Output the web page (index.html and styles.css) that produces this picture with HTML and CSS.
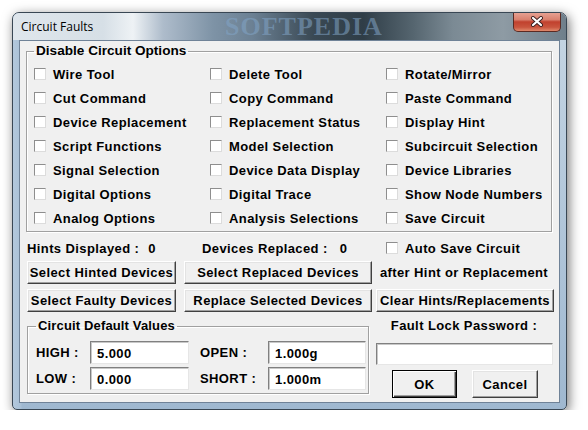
FILE: index.html
```html
<!DOCTYPE html>
<html>
<head>
<meta charset="utf-8">
<link rel="stylesheet" href="styles.css">
</head>
<body>
<div class="window">
  <div class="titlebar">
    <span class="title">Circuit Faults</span>
    <span class="watermark">SOFTPEDIA</span>
    <div class="close">
      <svg width="14" height="11" viewBox="0 0 14 11">
        <path d="M3 2 L11 9 M11 2 L3 9" stroke="#3a2020" stroke-width="4" stroke-linecap="round"/>
        <path d="M3 2 L11 9 M11 2 L3 9" stroke="#ffffff" stroke-width="2.2" stroke-linecap="round"/>
      </svg>
    </div>
  </div>
  <div class="client">
    <fieldset class="group options">
      <legend class="big">Disable Circuit Options</legend>
      <div class="opt-grid">
        <label class="chk"><span class="box"></span>Wire Tool</label>
        <label class="chk"><span class="box"></span>Delete Tool</label>
        <label class="chk"><span class="box"></span>Rotate/Mirror</label>
        <label class="chk"><span class="box"></span>Cut Command</label>
        <label class="chk"><span class="box"></span>Copy Command</label>
        <label class="chk"><span class="box"></span>Paste Command</label>
        <label class="chk"><span class="box"></span>Device Replacement</label>
        <label class="chk"><span class="box"></span>Replacement Status</label>
        <label class="chk"><span class="box"></span>Display Hint</label>
        <label class="chk"><span class="box"></span>Script Functions</label>
        <label class="chk"><span class="box"></span>Model Selection</label>
        <label class="chk"><span class="box"></span>Subcircuit Selection</label>
        <label class="chk"><span class="box"></span>Signal Selection</label>
        <label class="chk"><span class="box"></span>Device Data Display</label>
        <label class="chk"><span class="box"></span>Device Libraries</label>
        <label class="chk"><span class="box"></span>Digital Options</label>
        <label class="chk"><span class="box"></span>Digital Trace</label>
        <label class="chk"><span class="box"></span>Show Node Numbers</label>
        <label class="chk"><span class="box"></span>Analog Options</label>
        <label class="chk"><span class="box"></span>Analysis Selections</label>
        <label class="chk"><span class="box"></span>Save Circuit</label>
      </div>
    </fieldset>

    <div class="lower">
      <div class="stat"><span>Hints Displayed :</span><span class="num">0</span></div>
      <div class="stat stat2"><span>Devices Replaced :</span><span class="num">0</span></div>
      <label class="chk auto"><span class="box"></span>Auto Save Circuit</label>

      <button class="btn w1">Select Hinted Devices</button>
      <button class="btn w2">Select Replaced Devices</button>
      <div class="note">after Hint or Replacement</div>

      <button class="btn w1 r2">Select Faulty Devices</button>
      <button class="btn w2 r2">Replace Selected Devices</button>
      <button class="btn w3 r2">Clear Hints/Replacements</button>

      <fieldset class="group defaults">
        <legend>Circuit Default Values</legend>
        <div class="def-grid">
          <span class="lbl">HIGH :</span><div class="field w-a">5.000</div>
          <span class="lbl">OPEN :</span><div class="field w-b">1.000g</div>
          <span class="lbl">LOW :</span><div class="field w-a">0.000</div>
          <span class="lbl">SHORT :</span><div class="field w-b">1.000m</div>
        </div>
      </fieldset>

      <div class="lock">
        <div class="lock-title">Fault Lock Password :</div>
        <div class="field pw"></div>
        <div class="actions">
          <button class="btn ok">OK</button>
          <button class="btn cancel">Cancel</button>
        </div>
      </div>
    </div>
  </div>
</div>
</body>
</html>
```
FILE: styles.css
```css
html, body {
  margin: 0;
  padding: 0;
  background: #ffffff;
}
body {
  padding: 12px 0 0 12px;
  font-family: "Liberation Sans", Arial, sans-serif;
}
.window {
  width: 555px;
  height: 398px;
  box-sizing: border-box;
  border: 1px solid #394754;
  border-radius: 7px 7px 5px 5px;
  background:
    linear-gradient(90deg, #b3c8dc 0px, #a9c0d6 8px, rgba(0,0,0,0) 9px),
    linear-gradient(180deg, #c6d6e4 0%, #9fb8d0 100%);
  box-shadow: 2px 3px 12px rgba(0,0,0,0.55);
  display: flex;
  flex-direction: column;
  overflow: hidden;
}
.titlebar {
  height: 27px;
  display: flex;
  align-items: flex-start;
  position: relative;
  overflow: hidden;
  background: linear-gradient(90deg,
    #dfe6ec 0px, #d6dfe6 90px, #eef2f5 120px, #aebccb 150px,
    #7e93a6 200px, #6b8093 240px, #3a4954 300px, #2f3d47 350px,
    #55656f 400px, #7b8a94 440px, #8e9ba4 490px, #6e7e8a 555px);
  flex: none;
}
.title {
  font-family: "Open Sans", "Liberation Sans", sans-serif;
  font-size: 12px;
  color: #000;
  margin: 6px 0 0 8px;
  line-height: 16px;
}
.watermark {
  position: absolute;
  left: 212px;
  top: 1px;
  font-family: "Liberation Serif", serif;
  font-weight: bold;
  font-size: 26px;
  letter-spacing: 1px;
  color: rgba(130, 165, 200, 0.55);
  line-height: 26px;
}
.close {
  margin-left: auto;
  margin-right: 5px;
  margin-top: -1px;
  width: 46px;
  height: 19px;
  border: 1px solid #5b2a22;
  border-top: none;
  border-radius: 0 0 5px 5px;
  background: linear-gradient(180deg, #e8a597 0%, #d9816f 40%, #c1412e 52%, #c9553e 80%, #e08a6d 100%);
  display: flex;
  align-items: center;
  justify-content: center;
}
.client {
  margin: 0 6px 6px 6px;
  flex: 1;
  background: #f0f0f0;
  border: 1px solid #6f8297;
  padding: 1px 0 0 6px;
  font-weight: bold;
  font-size: 13px;
  letter-spacing: 0.4px;
  color: #000;
}
.group {
  margin: 0;
  border: 1px solid #a0a0a0;
  box-shadow: inset 1px 1px 0 #ffffff, 1px 1px 0 #ffffff;
  min-width: 0;
}
.group legend {
  padding: 0 2px;
  font-weight: bold;
  font-size: 13px;
  line-height: 16px;
  letter-spacing: 0.15px;
}
.group legend.big {
  font-size: 13.6px;
  line-height: 18px;
  letter-spacing: 0;
}
.options {
  width: 526px;
  box-sizing: border-box;
  padding: 2px 0 1px 7px;
}
.opt-grid {
  display: grid;
  grid-template-columns: 176px 176px 1fr;
  grid-auto-rows: 24px;
}
.chk {
  display: flex;
  align-items: center;
  white-space: nowrap;
}
.box {
  width: 12px;
  height: 12px;
  box-sizing: border-box;
  background: #ffffff;
  border: 1px solid;
  border-color: #8e8e8e #dcdcdc #dcdcdc #8e8e8e;
  margin-right: 7px;
  flex: none;
}
.lower {
  margin-left: 1px;
  margin-top: 7px;
  display: grid;
  grid-template-columns: 157px 192px 178px;
  grid-template-rows: 18px 23px 23px auto;
  row-gap: 4px;
  align-items: center;
}
.stat {
  display: flex;
}
.stat .num {
  margin-left: 9px;
}
.stat2 {
  margin-left: 18px;
}
.stat2 .num {
  margin-left: 12px;
}
.auto {
  margin-left: 10px;
}
.note {
  text-align: center;
  padding-right: 2px;
}
.btn {
  font-family: "Liberation Sans", Arial, sans-serif;
  font-weight: bold;
  font-size: 13px;
  letter-spacing: 0.4px;
  color: #000;
  background: #f0f0f0;
  border: 1px solid;
  border-color: #ffffff #404040 #404040 #ffffff;
  box-shadow: inset -1px -1px 0 #a0a0a0, inset 1px 1px 0 #e3e3e3;
  height: 23px;
  padding: 0;
  margin: 0;
}
.w1 { width: 149px; }
.w2 { width: 188px; }
.w3 { width: 178px; }
.r2 { margin-top: 1px; }
.defaults {
  grid-column: 1 / 3;
  width: 342px;
  box-sizing: border-box;
  margin-top: 3px;
  padding: 7px 0 3px 8px;
  align-self: start;
}
.def-grid {
  display: grid;
  grid-template-columns: 54px 110px 68px 98px;
  grid-auto-rows: 23px;
  row-gap: 3px;
  align-items: center;
}
.lbl {
  white-space: nowrap;
}
.field {
  box-sizing: border-box;
  height: 23px;
  background: #ffffff;
  border: 1px solid;
  border-color: #808080 #e6e6e6 #e6e6e6 #808080;
  box-shadow: inset 1px 1px 0 #c8c8c8;
  padding: 4px 0 0 6px;
  font-weight: bold;
  font-size: 13px;
}
.w-a { width: 99px; }
.w-b { width: 98px; }
.lock {
  align-self: start;
  margin-top: 3px;
}
.lock-title {
  text-align: center;
  height: 16px;
  line-height: 16px;
  padding-right: 2px;
}
.field.pw {
  width: 177px;
  height: 22px;
  margin-top: 9px;
}
.actions {
  display: flex;
  margin-top: 5px;
  padding-left: 16px;
  gap: 15px;
}
.ok, .cancel {
  height: 28px;
  width: 66px;
}
.ok {
  width: 65px;
  border: 1px solid #000;
  box-shadow: inset 1px 1px 0 #ffffff, inset -1px -1px 0 #404040, inset -2px -2px 0 #a0a0a0;
}
```
